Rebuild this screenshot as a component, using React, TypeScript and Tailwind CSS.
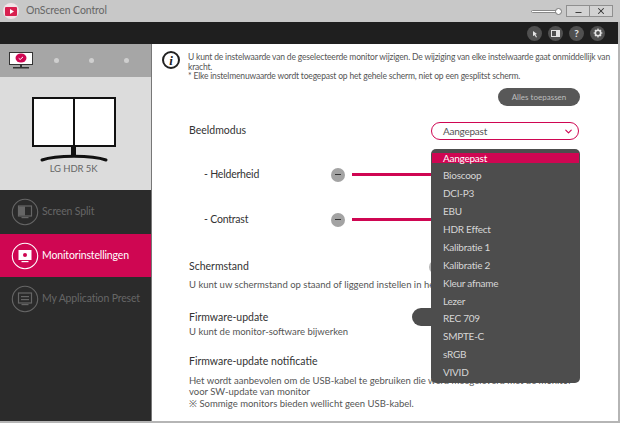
import { ChevronDown, Minus, X } from "lucide-react";

const modes = [
  "Aangepast",
  "Bioscoop",
  "DCI-P3",
  "EBU",
  "HDR Effect",
  "Kalibratie 1",
  "Kalibratie 2",
  "Kleur afname",
  "Lezer",
  "REC 709",
  "SMPTE-C",
  "sRGB",
  "VIVID",
];

function NavIcon({ active, kind }: { active?: boolean; kind: "split" | "settings" | "preset" }) {
  const c = active ? "#ffffff" : "#666666";
  return (
    <svg width="28" height="28" viewBox="0 0 28 28" fill="none">
      <circle cx="14" cy="14" r="12.7" stroke={c} strokeWidth="1.1" />
      {kind === "settings" && (
        <>
          <rect x="7.5" y="8" width="13" height="10" fill="#fff" />
          <circle cx="14" cy="13" r="2" fill="#cf0652" />
          <rect x="10.5" y="19" width="7" height="1.2" fill="#fff" />
        </>
      )}
      {kind === "split" && (
        <>
          <rect x="7.5" y="8" width="13" height="10" stroke={c} strokeWidth="1.2" />
          <rect x="8" y="8.5" width="6" height="9" fill={c} />
          <rect x="10.5" y="19" width="7" height="1.2" fill={c} />
        </>
      )}
      {kind === "preset" && (
        <>
          <rect x="7.5" y="8" width="13" height="10" stroke={c} strokeWidth="1.2" />
          <rect x="10" y="11" width="8" height="1.2" fill={c} />
          <rect x="10" y="14" width="8" height="1.2" fill={c} />
          <rect x="10.5" y="19" width="7" height="1.2" fill={c} />
        </>
      )}
    </svg>
  );
}

function ToolIcon({ children }: { children: React.ReactNode }) {
  return (
    <div className="flex h-[15px] w-[15px] items-center justify-center rounded-full bg-[#505050] text-[10px] font-bold leading-none text-[#e4e4e4]">
      {children}
    </div>
  );
}

function SliderRow({ label }: { label: string }) {
  return (
    <div className="flex h-[14px] items-center pl-[15px]">
      <span className="w-[127px] text-[10.5px] tracking-[-0.2px] text-[#333]">{label}</span>
      <div className="flex h-[14px] w-[14px] items-center justify-center rounded-full bg-[#a3a3a3]">
        <div className="h-[1.5px] w-[6px] bg-[#333]" />
      </div>
      <div className="ml-[7px] h-[3px] w-[120px] bg-[#cf0652]" />
    </div>
  );
}

export default function App() {
  return (
    <div className="relative flex h-[423px] w-[620px] flex-col overflow-hidden bg-[#b5b5b5] font-['Lato',sans-serif]">
      {/* title bar */}
      <div className="flex h-[22px] items-center bg-[#c8c8c8] pl-[3px]">
        <div className="flex h-[16px] w-[16px] items-center justify-center rounded-full bg-[#f1e3e7]">
          <svg width="12" height="9" viewBox="0 0 12 9">
            <rect width="12" height="9" rx="1" fill="#d8204f" />
            <path d="M5 2l4 2.5L5 7z" fill="#fff" />
          </svg>
        </div>
        <span className="ml-[7px] text-[10.5px] tracking-[-0.1px] text-[#666]">OnScreen Control</span>
        <div className="ml-auto flex items-center pr-[7px]">
          <div className="relative mr-[5px] h-[3px] w-[30px] rounded-full border border-[#888] bg-white">
            <div className="absolute -right-[2px] -top-[3px] h-[7px] w-[7px] rounded-full border border-[#777] bg-white" />
          </div>
          <div className="flex h-[12px] w-[24px] items-center justify-center border border-[#8f8f8f] bg-[#d2d2d2]">
            <Minus size={9} strokeWidth={2.5} className="mt-[2px] text-[#333]" />
          </div>
          <div className="flex h-[12px] w-[23px] items-center justify-center border border-l-0 border-[#8f8f8f] bg-[#d2d2d2]">
            <X size={10} strokeWidth={2.5} className="text-[#333]" />
          </div>
        </div>
      </div>

      {/* tool bar */}
      <div className="mr-[2px] flex h-[22px] items-center justify-end gap-[6px] bg-[#1f1f1f] pr-[13px]">
        <ToolIcon>
          <svg width="9" height="9" viewBox="0 0 9 9">
            <path d="M3 2l4 3-1.6.4L7 8l-1 .6-1.3-2.4L3 7z" fill="#e4e4e4" />
          </svg>
        </ToolIcon>
        <ToolIcon>
          <svg width="9" height="7" viewBox="0 0 9 7">
            <rect x=".5" y=".5" width="8" height="6" fill="none" stroke="#e4e4e4" />
            <rect x="5" y="1" width="3" height="5" fill="#e4e4e4" />
          </svg>
        </ToolIcon>
        <ToolIcon>?</ToolIcon>
        <ToolIcon>
          <svg width="10" height="10" viewBox="0 0 10 10">
            <circle cx="5" cy="5" r="2.7" fill="none" stroke="#e4e4e4" strokeWidth="1.6" />
            <path d="M5 .6v1.6M5 7.8v1.6M.6 5h1.6M7.8 5h1.6M1.9 1.9L3 3M7 7l1.1 1.1M8.1 1.9L7 3M3 7L1.9 8.1" stroke="#e4e4e4" strokeWidth="1.2" />
          </svg>
        </ToolIcon>
      </div>

      <div className="flex min-h-0 flex-1 border-b-2 border-r-2 border-b-[#b5b5b5] border-r-[#b5b5b5]">
        {/* sidebar */}
        <div className="flex w-[152px] shrink-0 flex-col border-r border-[#777] bg-[#2b2b2b]">
          <div className="flex h-[33px] items-center bg-[#a6a6a6] pl-[9px]">
            <svg width="25" height="17" viewBox="0 0 25 17">
              <rect x=".5" y=".5" width="23" height="12" fill="#fff" stroke="#333" />
              <ellipse cx="12" cy="6" rx="5.5" ry="4.5" fill="#cf0652" />
              <path d="M9.7 6.3l1.5 1.2 2.8-2.6" fill="none" stroke="#fff" />
              <rect x="11" y="13" width="2" height="2" fill="#333" />
              <rect x="4" y="15" width="16" height="1.5" fill="#333" />
            </svg>
            <div className="ml-[20px] flex gap-[30px]">
              <div className="h-[5px] w-[5px] rounded-full bg-[#cfcfcf]" />
              <div className="h-[5px] w-[5px] rounded-full bg-[#cfcfcf]" />
              <div className="h-[5px] w-[5px] rounded-full bg-[#cfcfcf]" />
            </div>
          </div>
          <div className="flex h-[113px] flex-col bg-[#dcdcdc] pl-[31px] pt-[20px]">
            <svg width="85" height="65" viewBox="0 0 85 65">
              <rect x="2" y="1" width="82" height="48" fill="#fff" stroke="#111" strokeWidth="2" />
              <rect x="42" y="1" width="2" height="48" fill="#111" />
              <rect x="40" y="49" width="5" height="11" fill="#111" />
              <path d="M11 63C25 58 61 58 75 63" fill="none" stroke="#111" strokeWidth="3" strokeLinecap="round" />
            </svg>
            <span className="w-[85px] text-center text-[9.5px] leading-[14px] tracking-[-0.1px] text-[#666]">LG HDR 5K</span>
          </div>
          <div className="flex h-[44px] items-center pl-[11px]">
            <NavIcon kind="split" />
            <span className="ml-[3px] text-[10.5px] tracking-[-0.15px] text-[#666]">Screen Split</span>
          </div>
          <div className="flex h-[43px] items-center bg-[#cf0652] pl-[11px]">
            <NavIcon active kind="settings" />
            <span className="ml-[3px] text-[10.5px] tracking-[-0.15px] text-white">Monitorinstellingen</span>
          </div>
          <div className="flex h-[44px] items-center pl-[11px]">
            <NavIcon kind="preset" />
            <span className="ml-[3px] text-[10.5px] tracking-[-0.15px] text-[#666]">My Application Preset</span>
          </div>
        </div>

        {/* content */}
        <div className="flex min-w-0 flex-1 flex-col bg-white">
          <div className="flex pl-[10px] pt-[7px]">
            <div className="flex h-[18px] w-[18px] shrink-0 items-center justify-center rounded-full border-2 border-[#222] font-['Liberation_Serif',serif] text-[13px] font-bold italic leading-none text-[#222]">
              i
            </div>
            <p className="ml-[8px] mt-[2px] w-[428px] text-[8.5px] leading-[9.5px] tracking-[-0.17px] text-[#555]">
              U kunt de instelwaarde van de geselecteerde monitor wijzigen. De wijziging van elke instelwaarde gaat onmiddellijk van kracht.
              <br />* Elke instelmenuwaarde wordt toegepast op het gehele scherm, niet op een gesplitst scherm.
            </p>
          </div>
          <div className="flex justify-end pr-[38px] pt-[6px]">
            <div className="flex h-[18px] w-[82px] items-center justify-center rounded-full bg-[#585858] text-[8px] text-[#bdbdbd]">
              Alles toepassen
            </div>
          </div>
          <div className="box-content flex h-[18px] items-center pl-[37px] pt-[16px]">
            <span className="text-[10.5px] text-[#333]">Beeldmodus</span>
          </div>

          <div className="flex flex-col gap-[31px] pl-[37px] pt-[28px]">
            <SliderRow label="- Helderheid" />
            <SliderRow label="- Contrast" />
          </div>

          <div className="pl-[37px] pt-[32px]">
            <p className="text-[10.5px] leading-[14px] text-[#333]">Schermstand</p>
            <p className="mt-[5px] text-[9.5px] leading-[14px] text-[#555]">U kunt uw schermstand op staand of liggend instellen in het programma</p>
            <p className="mt-[18px] text-[10.5px] leading-[14px] text-[#333]">Firmware-update</p>
            <p className="mt-[1px] text-[9.5px] leading-[14px] text-[#555]">U kunt de monitor-software bijwerken</p>
            <p className="mt-[15px] text-[10.5px] leading-[14px] text-[#333]">Firmware-update notificatie</p>
            <p className="mt-[7px] w-[430px] text-[9.5px] leading-[11.5px] text-[#555]">
              Het wordt aanbevolen om de USB-kabel te gebruiken die werd meegeleverd met de monitor
              <br />
              voor SW-update van monitor
              <br />※ Sommige monitors bieden wellicht geen USB-kabel.
            </p>
          </div>
        </div>
      </div>

      {/* bits under the open dropdown */}
      <div className="absolute left-[429px] top-[260px] h-[14px] w-[20px] rounded-l-full bg-[#b5b5b5]" />
      <div className="absolute left-[412px] top-[308px] h-[18px] w-[40px] rounded-l-full bg-[#4d4d4d]" />

      {/* select */}
      <div className="absolute left-[431px] top-[122px] flex h-[18px] w-[148px] items-center justify-between rounded-full border-[1.5px] border-[#cf0652] bg-white pl-[11px] pr-[4px] text-[10px] tracking-[-0.25px] text-[#555]">
        Aangepast
        <ChevronDown size={11} strokeWidth={2.5} className="text-[#cf0652]" />
      </div>

      {/* dropdown */}
      <div className="absolute left-[431px] top-[149px] h-[234px] w-[149px] overflow-hidden rounded-[5px] bg-[#4d4d4d] text-[10px] tracking-[-0.25px] text-[#d6d6d6]">
        {modes.map((mode, i) => (
          <div
            key={mode}
            className={
              i === 0
                ? "mx-[1px] mb-[3.5px] mt-[4px] flex h-[10px] items-center bg-[#cf0652] pl-[11px] text-white"
                : "flex h-[17.95px] items-center pl-[12px]"
            }
          >
            {mode}
          </div>
        ))}
      </div>
    </div>
  );
}
